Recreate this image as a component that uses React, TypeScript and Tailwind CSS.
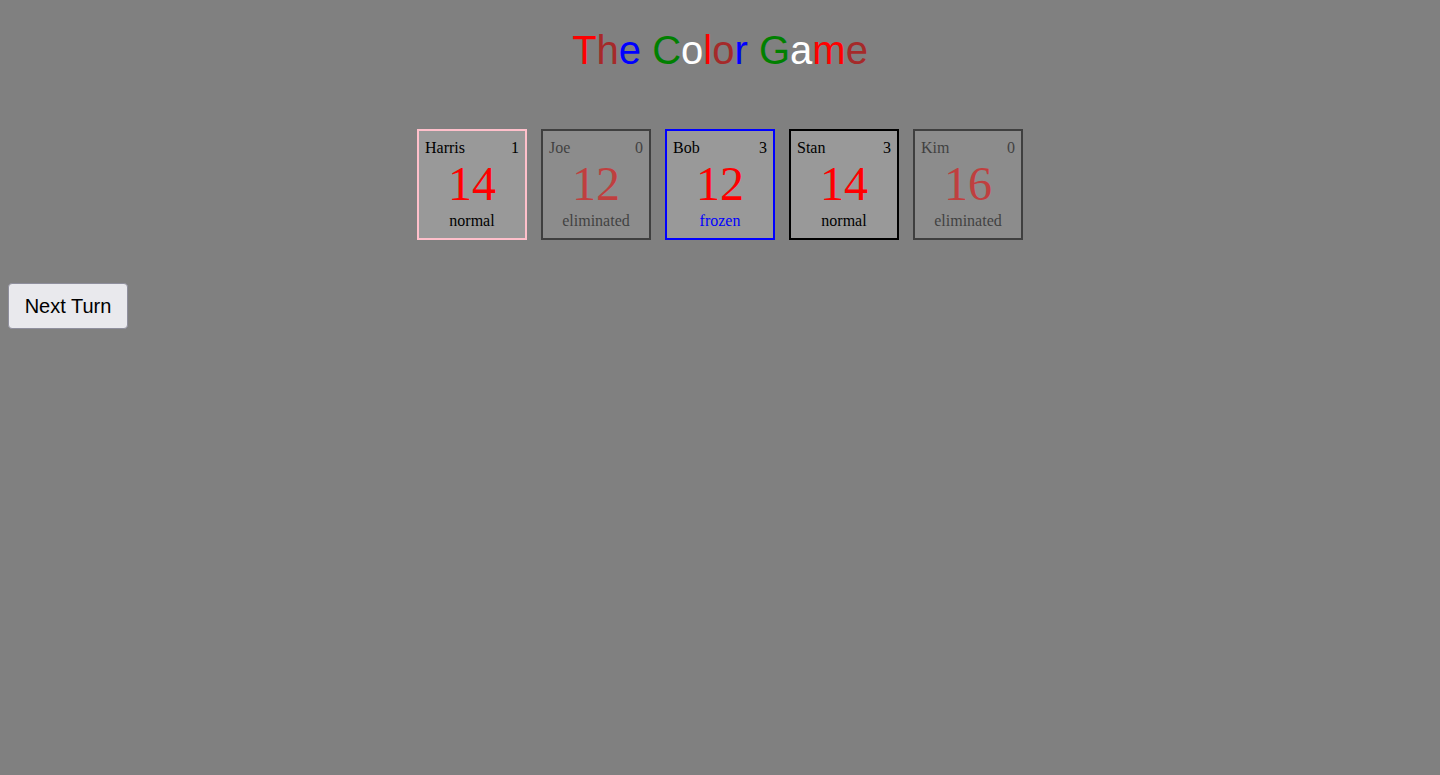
import React from 'react';

const titleColors = ['#ff0000', '#a52a2a', '#0000ff', '#008000', '#ffffff'];

const players = [
  { name: 'Harris', score: 1, value: 14, status: 'normal', border: 'border-[#ffc0cb]' },
  { name: 'Joe', score: 0, value: 12, status: 'eliminated', border: 'border-black' },
  { name: 'Bob', score: 3, value: 12, status: 'frozen', border: 'border-[#0000ff]' },
  { name: 'Stan', score: 3, value: 14, status: 'normal', border: 'border-black' },
  { name: 'Kim', score: 0, value: 16, status: 'eliminated', border: 'border-black' },
];

const Title: React.FC = () => {
  let i = 0;
  return (
    <h1 className="text-center text-[40px] leading-[46px] font-normal font-['Liberation_Sans',Arial,sans-serif]">
      {'The Color Game'.split('').map((ch, idx) => {
        if (ch === ' ') return <span key={idx}> </span>;
        const color = titleColors[i++ % titleColors.length];
        return (
          <span key={idx} style={{ color }}>
            {ch}
          </span>
        );
      })}
    </h1>
  );
};

const PlayerCard: React.FC<{ player: (typeof players)[number] }> = ({ player }) => {
  const out = player.status === 'eliminated';
  return (
    <div
      className={`w-[110px] h-[111px] box-border border-2 ${player.border} bg-white/20 px-[6px] pt-[8px] text-[16px] font-['Liberation_Serif','Times_New_Roman',serif] text-black ${out ? 'opacity-50' : ''}`}
    >
      <div className="flex justify-between leading-[18px]">
        <span>{player.name}</span>
        <span>{player.score}</span>
      </div>
      <div className="text-center text-[48px] leading-[53px] text-[#ff0000]">{player.value}</div>
      <div className={`mt-[2px] text-center leading-[18px] ${player.status === 'frozen' ? 'text-[#0000ff]' : ''}`}>
        {player.status}
      </div>
    </div>
  );
};

export default function App() {
  return (
    <div className="min-h-[775px] bg-[#808080] p-2">
      <div className="pt-[19px]">
        <Title />
      </div>
      <div className="mt-[56px] flex justify-center gap-[14px]">
        {players.map((p) => (
          <PlayerCard key={p.name} player={p} />
        ))}
      </div>
      <button className="mt-[43px] w-[120px] h-[46px] rounded-[4px] border border-[#8f8f9d] bg-[#e9e9ed] text-[20px] text-black font-['Liberation_Sans',Arial,sans-serif]">
        Next Turn
      </button>
    </div>
  );
}
